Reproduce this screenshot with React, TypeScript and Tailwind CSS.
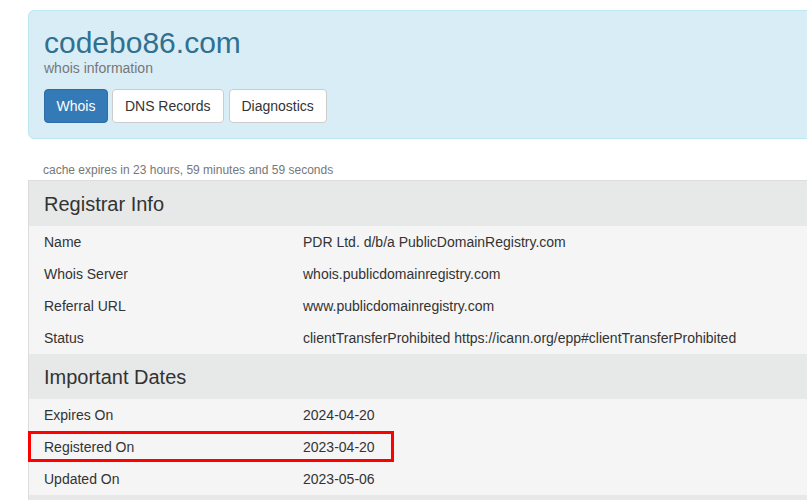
import React from "react";

const font = { fontFamily: '"Liberation Sans", Arial, Helvetica, sans-serif' };

function Header({ title }: { title: string }) {
  return (
    <div className="h-[45px] bg-[#e7e8e8] pl-[15px] flex items-center text-[20px] leading-[22px] text-[#333]">
      {title}
    </div>
  );
}

function Row({ label, value, highlight }: { label: string; value: string; highlight?: boolean }) {
  return (
    <div className="relative grid grid-cols-[259px_1fr] h-[32px] items-center bg-[#f5f5f5] text-[14px] leading-[20px] text-[#333]">
      <div className="pl-[15px] whitespace-nowrap">{label}</div>
      <div className="pl-[15px] whitespace-nowrap">{value}</div>
      {highlight && (
        <div className="absolute left-[-1px] top-0 w-[366px] h-[31px] border-[3px] border-[#ff0000] pointer-events-none" />
      )}
    </div>
  );
}

export default function App() {
  return (
    <div className="w-[807px] h-[500px] overflow-hidden bg-white" style={font}>
      <div className="pl-[28px] pt-[10px]">
        <div className="w-[800px] bg-[#d9edf7] border border-[#bce8f1] rounded-l-[6px] pt-[16px] pb-[15px] pl-[15px]">
          <h1 className="text-[30px] leading-[31px] text-[#31708f] font-normal">codebo86.com</h1>
          <p className="text-[14px] leading-[20px] text-[#777]">whois information</p>
          <div className="flex gap-[4px] mt-[11px]">
            <button className="h-[34px] px-[11.5px] text-[14px] leading-[20px] text-white bg-[#337ab7] border border-[#2e6da4] rounded-[4px]">
              Whois
            </button>
            <button className="h-[34px] px-[12px] text-[14px] leading-[20px] text-[#333] bg-white border border-[#ccc] rounded-[4px]">
              DNS Records
            </button>
            <button className="h-[34px] px-[12px] text-[14px] leading-[20px] text-[#333] bg-white border border-[#ccc] rounded-[4px] ml-[1px]">
              Diagnostics
            </button>
          </div>
        </div>
        <div className="mt-[23px] pl-[15px] text-[12px] leading-[17px] text-[#777] pb-[1px]">
          cache expires in 23 hours, 59 minutes and 59 seconds
        </div>
        <div className="w-[800px] border-t border-l border-[#ddd]">
          <Header title="Registrar Info" />
          <Row label="Name" value="PDR Ltd. d/b/a PublicDomainRegistry.com" />
          <Row label="Whois Server" value="whois.publicdomainregistry.com" />
          <Row label="Referral URL" value="www.publicdomainregistry.com" />
          <Row label="Status" value="clientTransferProhibited https://icann.org/epp#clientTransferProhibited" />
          <Header title="Important Dates" />
          <Row label="Expires On" value="2024-04-20" />
          <Row label="Registered On" value="2023-04-20" highlight />
          <Row label="Updated On" value="2023-05-06" />
          <div className="h-[45px] bg-[#e7e8e8]" />
        </div>
      </div>
    </div>
  );
}
